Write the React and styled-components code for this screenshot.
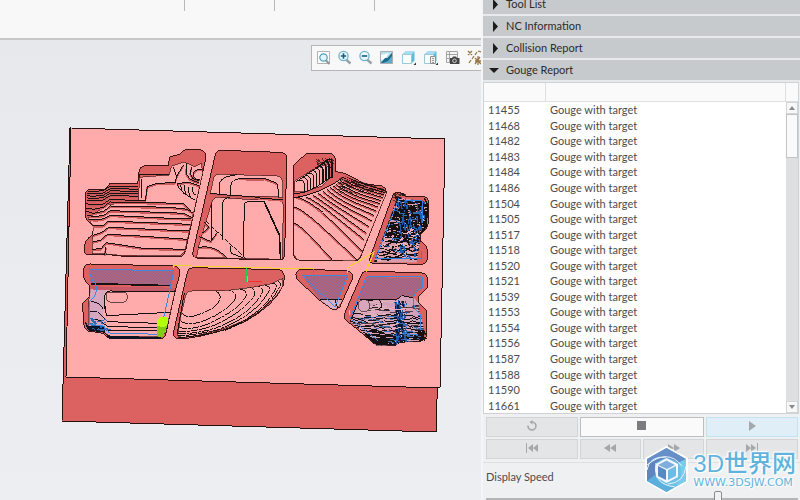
import React, { useState } from "react";
import styled, { createGlobalStyle } from "styled-components";

const GlobalStyle = createGlobalStyle`
  * {
    box-sizing: border-box;
  }

  body {
    margin: 0;
    overflow: hidden;
    background: #eeeff1;
    color: #4c4c4c;
    font-family: Lato, "Open Sans", sans-serif;
    font-size: 11px;
  }

  button {
    font: inherit;
    color: inherit;
  }
`;

const Page = styled.div`
  display: flex;
  height: 100vh;
  overflow: hidden;
`;

const Workspace = styled.main`
  flex: 1;
  min-width: 0;
  display: flex;
  flex-direction: column;
  overflow: hidden;
  background: linear-gradient(#e6e8ec, #edeef1);
`;

const Ribbon = styled.header`
  flex: none;
  display: flex;
  height: 40px;
  background: #f8f8f8;
  border-bottom: 2px solid #c6c8c8;
`;

const RibbonGroup = styled.div`
  width: ${(props) => props.$width}px;
  height: 11px;
  border-right: 1px solid #b9b9b9;
`;

const ViewToolbar = styled.div`
  flex: none;
  align-self: flex-end;
  display: flex;
  align-items: center;
  width: 170px;
  height: 26px;
  margin-top: 5px;
  padding: 0 0 2px 1px;
  overflow: hidden;
  background: #f8f8f8;
  border: 1px solid #b4b6b8;
  border-right: 0;
`;

const ToolButton = styled.button`
  flex: none;
  display: flex;
  justify-content: center;
  width: ${(props) => (props.$wide ? 22 : 21)}px;
  padding: 0;
  border: 0;
  background: none;
`;

const Model = styled.svg`
  flex: none;
  width: 390px;
  height: 310px;
  margin: 54px 0 0 60px;
`;

const Panel = styled.aside`
  flex: none;
  display: flex;
  flex-direction: column;
  width: 319px;
  background: #eff0f1;
  border-left: 2px solid #f4f5f6;
`;

const Accordion = styled.nav`
  display: flex;
  flex-direction: column;
  margin-top: -6px;
`;

const AccordionHeader = styled.button`
  display: flex;
  align-items: center;
  gap: 6px;
  height: 22px;
  padding: 0 6px;
  border: 0;
  border-bottom: 2px solid #e7e9ea;
  background: #c6cacc;
  color: #2b2b2b;
  line-height: 12px;
  text-align: left;
`;

const Arrow = styled.svg`
  width: 11px;
  height: 11px;
  fill: #1c1c1c;
`;

const Report = styled.section`
  display: grid;
  grid-template-columns: 1fr 12px;
  margin-right: 1px;
  background: #ffffff;
  border: 1px solid #d0d2d3;
`;

const ReportTable = styled.table`
  width: 100%;
  height: 330px;
  border-collapse: separate;
  border-spacing: 0;
  table-layout: fixed;
`;

const HeadCell = styled.th`
  width: ${(props) => (props.$narrow ? "62px" : "auto")};
  height: 19px;
  padding: 0;
  background: #fafafa;
  border-right: 1px solid #dcdedf;
  border-bottom: 1px solid #dcdedf;
`;

const Cell = styled.td`
  padding: 0 4px;
  line-height: 15px;
`;

const ScrollBar = styled.div`
  display: flex;
  flex-direction: column;
  background: #dddfe1;
`;

const ScrollCorner = styled.div`
  height: 19px;
  background: #fafafa;
  border-bottom: 1px solid #dcdedf;
`;

const ScrollButton = styled.button`
  display: flex;
  align-items: center;
  justify-content: center;
  height: 12px;
  padding: 0;
  border: 1px solid #d2d4d5;
  background: #f8f8f8;
`;

const ScrollThumb = styled.div`
  height: 44px;
  margin-bottom: auto;
  background: #fafafa;
  border: 1px solid #c2c4c6;
`;

const Controls = styled.div`
  display: grid;
  grid-template-columns: 3fr 2fr 2fr 3fr;
  gap: 2px;
  padding: 3px 2px 3px 3px;
  border-bottom: 1px solid #dfe0e1;
`;

const tones = {
  disabled: "background: #e4e5e7; border-color: #d3d4d6; color: #a6a7a9;",
  normal: "background: #fafafa; border-color: #bdbebf; color: #7c7c7e;",
  active: "background: #dfeef7; border-color: #c3e2f2; color: #a3a8ac;",
};

const ControlButton = styled.button`
  display: flex;
  align-items: center;
  justify-content: center;
  height: 20px;
  padding: 0 0 2px;
  border: 1px solid;
  ${(props) => tones[props.$tone || "disabled"]}
  ${(props) => props.$double && "grid-column: span 2;"}
`;

const Speed = styled.div`
  display: flex;
  flex-direction: column;
  gap: 4px;
  padding: 6px 2px 0 3px;
`;

const SpeedLabel = styled.label`
  line-height: 16px;
`;

const Slider = styled.input`
  appearance: none;
  width: 100%;
  height: 20px;
  margin: 0;
  background: linear-gradient(#b4b5b6, #b4b5b6) center / 100% 2px no-repeat;

  &::-webkit-slider-thumb {
    appearance: none;
    width: 8px;
    height: 16px;
    border: 1px solid #8b8c8e;
    border-radius: 2px;
    background: #f2f2f2;
  }
`;

const Watermark = styled.div`
  position: absolute;
  right: 4px;
  bottom: 6px;
  display: flex;
  align-items: center;
  gap: 4px;
  pointer-events: none;
`;

const WatermarkText = styled.div`
  display: flex;
  flex-direction: column;
  color: #62b3dc;
  text-shadow: 0 0 2px #ffffff, 1px 1px 1px #ffffff, -1px -1px 1px #ffffff,
    0 0 4px #ffffff;
`;

const WatermarkName = styled.span`
  font-family: "Liberation Sans", "Noto Sans CJK SC", sans-serif;
  font-size: 24px;
  font-weight: 500;
  line-height: 26px;
`;

const WatermarkSite = styled.span`
  font-family: "DejaVu Sans", sans-serif;
  font-size: 11px;
  line-height: 12px;
`;

const sections = ["Tool List", "NC Information", "Collision Report", "Gouge Report"];

const gouges = [
  11455, 11468, 11482, 11483, 11484, 11486, 11504, 11505, 11517, 11518, 11520,
  11521, 11539, 11553, 11554, 11556, 11587, 11588, 11590, 11661,
];

const Lens = () => (
  <>
    <path d="M9 9.5l4.5 4" stroke="#9aa2a6" strokeWidth="2.4" />
    <circle cx="6.5" cy="6" r="4.6" fill="#eaf7fb" stroke="#6fb3cd" strokeWidth="1.3" />
  </>
);

const Cube = () => (
  <>
    <path d="M1.5 4.5l3-3h9v9l-3 3h-9z" fill="#5dbbdb" />
    <path d="M1.5 4.5l3-3h9l-3 3z" fill="#a9def0" />
    <path d="M1.5 4.5h9v9h-9z" fill="#fdfefe" stroke="#9cc9da" />
  </>
);

const tools = [
  {
    label: "Refit",
    icon: (
      <>
        <path d="M1.5 1.5h12v12h-12z" fill="#ffffff" stroke="#b3b3b3" />
        <path d="M9.5 10l4 4" stroke="#8f979b" strokeWidth="2" />
        <circle cx="7.5" cy="7.5" r="3.7" fill="#e4f5fa" stroke="#4a9dbc" strokeWidth="1.2" />
      </>
    ),
  },
  {
    label: "Zoom In",
    icon: (
      <>
        <Lens />
        <path d="M3.8 6h5.4M6.500 3.300v5.400" stroke="#155f82" strokeWidth="1.6" />
      </>
    ),
  },
  {
    label: "Zoom Out",
    icon: (
      <>
        <Lens />
        <path d="M3.8 6h5.4" stroke="#155f82" strokeWidth="1.6" />
      </>
    ),
  },
  {
    label: "Repaint",
    icon: (
      <>
        <path d="M1.5 1.5h12v12h-12z" fill="#7cc4de" stroke="#a9adaf" />
        <path d="M2 2h11L7 10l-5 1z" fill="#b6e0ee" />
        <path d="M2 5l8-2-4 6-4 1z" fill="#f8fdfe" />
        <path d="M13 3L8.500 8l-2.500 0-4 5h11z" fill="#1e6c8d" />
        <path d="M13 6l-4 5-5 2h9z" fill="#58aecd" />
      </>
    ),
  },
  {
    label: "Display Style",
    wide: true,
    icon: (
      <>
        <Cube />
        <path d="M15 12.5V15h-2.5z" fill="#333333" />
      </>
    ),
  },
  {
    label: "Saved Orientations",
    wide: true,
    icon: (
      <>
        <Cube />
        <path d="M7.5 6.5h5v7h-5z" fill="#f2f2f2" stroke="#8f8f8f" />
        <path d="M9 8.5h2M9 10.5h2M9 12.5h2" stroke="#999999" />
        <path d="M15 12.5V15h-2.5z" fill="#333333" />
      </>
    ),
  },
  {
    label: "View Manager",
    wide: true,
    icon: (
      <>
        <path d="M1.5 1.5h11v11h-11zM1.5 4.5h11M1.5 8.5h5M4.5 1.5v11" fill="#f6f6f6" stroke="#a2a2a2" />
        <path d="M5 8h2l1-1.5h3L12 8h2.500v6H5z" fill="#444444" />
        <circle cx="9.500" cy="10.800" r="1.800" fill="#444444" stroke="#d7d7d7" />
      </>
    ),
  },
  {
    label: "Datum Display",
    wide: true,
    icon: (
      <path
        d="M1 1l4 4M5 1L1 5M2 13l2-3M5 9l2-3M8 5l2-3M11 1l3 1M8 8l6 6M13 7l-5 7M11 6v9M8 11h7"
        stroke="#97783d"
        strokeWidth="1.3"
      />
    ),
  },
];

// small repeatable noise source so the tool marks look the same on each render
const noise = (seed) => {
  let s = seed;
  return () => {
    s = (s * 16807) % 2147483647;
    return s / 2147483647;
  };
};

const scratches = (seed, count, box, dx, dy) => {
  const rnd = noise(seed);
  let d = "";
  for (let i = 0; i < count; i++) {
    const x = box[0] + rnd() * box[2];
    const y = box[1] + rnd() * box[3];
    d += `M${x.toFixed(0)} ${y.toFixed(0)}l${(dx * (0.4 + rnd())).toFixed(0)} ${(dy * (0.3 + rnd())).toFixed(0)}`;
  }
  return d;
};

// evenly stacked passes across a box, each one wobbling a little
const passes = (seed, box, gap, slope, wobble) => {
  const rnd = noise(seed);
  let d = "";
  for (let y = box[1]; y < box[1] + box[3]; y += gap) {
    d += `M${box[0]} ${y}`;
    for (let x = 12; x <= box[2]; x += 12) {
      d += `L${box[0] + x} ${(y + x * slope + (rnd() - 0.5) * wobble).toFixed(0)}`;
    }
  }
  return d;
};

// every pocket is drawn on a 3x grid from its own origin
const Pocket = ({ x, y, children }) => (
  <g transform={`translate(${x} ${y}) scale(0.3333)`}>{children}</g>
);

const Wall = ({ d }) => <path d={d} fill="#dc6262" stroke="#3a1414" strokeWidth="3" />;
const Floor = ({ d }) => <path d={d} fill="#ffabab" stroke="#3a1414" strokeWidth="2" />;
const Step = ({ d }) => (
  <>
    <path d={d} stroke="#cf5c5c" strokeWidth="5" transform="translate(0 3)" />
    <path d={d} stroke="#161010" strokeWidth="3" />
  </>
);
const Line = ({ d, color = "#161010", width = 3, ...rest }) => (
  <path d={d} stroke={color} strokeWidth={width} {...rest} />
);

const fan = [
  [28, 280, 46, 285, 145, 393],
  [28, 231, 50, 234, 215, 388],
  [34, 202, 72, 206, 230, 362],
  [62, 200, 90, 210, 236, 328],
  [84, 196, 110, 212, 244, 310],
  [100, 190, 130, 214, 252, 290],
  [114, 184, 145, 212, 260, 272],
  [126, 178, 158, 208, 267, 256],
  [136, 172, 170, 202, 274, 243],
  [144, 167, 178, 196, 280, 231],
  [152, 162, 186, 190, 285, 221],
  [158, 156, 192, 182, 289, 212],
  [164, 151, 198, 174, 293, 203],
  [168, 146, 204, 168, 297, 195],
  [172, 141, 210, 162, 300, 188],
  [176, 136, 216, 158, 302, 181],
];

const fins = [0, 1, 2, 3, 4, 5, 6, 7, 8, 9];

const pocketD =
  "M322 200Q326 187 338 187Q352 187 360 198L415 200Q430 202 430 215V275Q430 295 408 312V335Q428 345 428 370Q430 402 412 403L264 400Q250 398 256 380Z";
const pocketE =
  "M72 40Q74 27 90 27L345 33Q360 36 360 55L345 110L318 235Q314 250 300 252L150 250Q138 248 130 235L85 228Q70 220 70 195L68 145L90 122V92Q68 75 72 58Z";
const pocketH =
  "M228 62Q232 48 248 48L412 54Q428 58 428 75L426 100L402 122V145L426 168L424 245L410 258L345 262L330 272H275L195 205Q175 195 177 180Z";
const floorD = "M266 398L338 200L362 206L412 212L426 222V290L405 312V338L395 398Z";
const floorH = "M196 200L224 135L340 132L350 122L385 126L402 145L405 170L420 235L410 258L345 262L330 272H275Z";

const Workpiece = () => (
  <Model
    viewBox="60 125 390 310"
    fill="none"
    shapeRendering="crispEdges"
    role="img"
    aria-label="Machined workpiece"
  >
    <defs>
      <clipPath id="floorD">
        <path d={floorD} />
      </clipPath>
      <clipPath id="floorH">
        <path d={floorH} />
      </clipPath>
      <clipPath id="floorC">
        <path d="M27 198Q110 185 175 138L300 178L304 188L224 392H27Z" />
      </clipPath>
      <pattern id="hatch" width="9" height="9" patternUnits="userSpaceOnUse">
        <rect width="9" height="9" fill="#b0657c" />
        <path d="M-2 11L11 -2M-2 2L2 -2M7 11L11 7" stroke="#91658f" strokeWidth="3" />
      </pattern>
    </defs>

    <path d="M70 128L62 421L436 432L445 139Z" fill="#dc6262" stroke="#251010" />
    <path d="M71 128L445 139L440 388L66 377Z" fill="#ffabab" stroke="#251010" />

    <Pocket x={60} y={120}>
      <Wall d="M76 222Q78 208 95 208L136 207L150 190H233L238 150Q240 140 252 138L326 137L328 112L345 106L358 104L374 90L422 90Q440 94 438 112L376 395Q372 410 355 410L180 408L140 403L82 405Q72 400 73 385Q74 355 98 346L100 318L80 300Q74 290 76 222Z" />
      <Floor d="M100 318L84 295L140 255L236 242L238 172L327 165L335 138L372 126L404 140L424 130L428 160L374 395L358 408L180 406L140 402L96 402L98 346Z" />
      {[212, 219, 226, 233, 240].map((y) => (
        <Step key={y} d={`M80 ${y}L96 ${y + 3}L130 ${y}L152 ${y - 14}L234 ${y - 11}`} />
      ))}
      <Step d="M78 250L96 255L130 252L150 238L256 243L262 200L290 190L345 188L352 165L370 135" />
      <Step d="M78 264L100 268L130 262L150 246L370 250L392 272" />
      <Step d="M79 274L100 280L132 274L150 258L330 262L382 268L400 280" />
      <Step d="M82 286L105 290L132 286L150 272L330 278L372 280L398 294" />
      <Step d="M88 298L110 300L132 296L152 286L330 295L392 297" />
      <Step d="M100 318L128 318L146 303L390 313" />
      <Step d="M98 346L124 338L146 322L386 333" />
      <Step d="M98 366L122 360L142 343L240 348L382 358" />
      <Step d="M96 388L124 386L138 368L250 385L378 388" />
      <Step d="M134 404L138 380" />
      <Line d="M238 172L240 162L327 165M246 176V235M345 190L350 170L340 140" />
      <Step d="M350 192L385 186L418 198M380 130L378 160L390 178L416 188M395 142L390 160L398 176L418 182M426 148Q398 146 400 168Q404 180 420 178" />
      <Line d="M352 192Q354 208 366 212M362 194Q364 220 378 224M374 196Q372 230 392 232M386 200Q384 236 404 240M398 200Q394 218 408 226" />
      <Line d="M402 410Q398 380 410 350L420 330" color="#8d3434" />
    </Pocket>

    <Pocket x={190} y={140}>
      <Wall d="M76 44Q80 31 94 31L270 37Q288 38 290 52L284 345Q283 360 268 360L20 354Q6 352 9 335Z" />
      <Floor d="M60 162L72 112Q78 101 95 103L262 108Q278 112 278 130L279 172L210 168L185 172Z" />
      <Floor d="M66 185Q70 172 84 172L200 180L262 180Q282 182 280 200L277 358L20 352L26 318Z" />
      <Step d="M60 160L120 166L190 170L210 174L280 180" />
      <Line d="M88 162V135Q90 115 115 109L140 104M123 168V135Q126 118 150 116H225L262 132L267 172" />
      <Step d="M146 114L180 117L225 116L262 130" />
      <Line d="M66 300V188M98 300V190Q100 175 120 172M160 352L163 195Q165 184 180 184L225 186" />
      <Line d="M222 184L268 285L272 358" width="5" />
      <Step d="M25 322Q70 312 110 352M28 290L62 304L80 280M42 246L58 262L36 280" />
      <Line d="M48 244L168 356" strokeDasharray="14 5" />
      <Line d="M120 318L124 340L160 354" />
    </Pocket>

    <Pocket x={285} y={130}>
      <Wall d="M27 105L35 98L62 72L140 70L152 85V125L180 130L240 162L292 168Q306 176 304 188L225 385Q222 393 210 392L38 390Q26 388 26 375Z" />
      <Floor d="M27 204Q110 190 175 142L300 184L304 190L224 385L210 392L38 390L27 375Z" />
      <Floor d="M29 186V152L50 140L78 122L110 108L130 104V150L110 168L60 186Z" />
      {fins.map((i) => (
        <Line
          key={i}
          width={i > 5 ? 4 : 3}
          d={`M${32 + i * 10} ${156 - i * 7}Q${50 + i * 10} ${142 - i * 7} ${60 + i * 9} ${162 - i * 7}V${188 - i * 5}`}
        />
      ))}
      <Line d={scratches(41, 26, [92, 84, 48, 26], 9, 7)} width="2" />
      <g clipPath="url(#floorC)">
        {fan.map(([x, y, cx, cy, ex, ey]) => (
          <Step key={y} d={`M${x} ${y}Q${cx} ${cy} ${(cx + ex) / 2} ${(cy + ey) / 2}L${ex} ${ey}`} />
        ))}
        <Line d={scratches(77, 110, [160, 135, 140, 50], 13, 7)} width="2" />
      </g>
      <Line d="M27 204Q110 190 175 142M27 192Q80 190 145 135" />

      <Wall d={pocketD} />
      <g clipPath="url(#floorD)">
        <path d={floorD} fill="#d99ba5" />
        <Line d={passes(6, [262, 200, 168, 200], 8, -0.05, 9)} width="4" />
        <Line d={scratches(5, 160, [285, 205, 140, 130], 20, 6)} width="4" />
        <Line d={scratches(15, 90, [345, 210, 75, 120], 5, 26)} width="4" />
        <Line d={scratches(9, 90, [335, 200, 82, 190], 3, 16)} color="#1f5bb0" width="4" />
        <Line d={scratches(21, 40, [300, 240, 110, 140], 16, 4)} color="#3068b4" />
        <Line d={scratches(31, 45, [268, 300, 130, 95], 12, -7)} color="#f0b3ba" />
      </g>
      <Line d="M342 204L272 386H410V362M360 213H412V280" color="#2e7fe8" />
      <Line d={scratches(8, 40, [324, 188, 30, 24], 7, 5)} width="2" />
      <Line d="M418 205L428 225L424 290L405 310" width="4" />
    </Pocket>

    <Pocket x={60} y={255}>
      <Wall d={pocketE} />
      <Floor d="M92 102L130 100L345 108L318 232L300 246L150 244L134 232L84 215L86 140Z" />
      <path d="M88 42L342 48L334 92L92 86Z" fill="url(#hatch)" />
      <path d="M90 100L138 102L132 150L128 200L150 240L88 214Z" fill="#c8a5c4" fillOpacity="0.75" />
      <path d="M90 94L342 98L340 112L140 106L92 103Z" fill="#c55b68" />
      <Line d="M92 86L332 92" width="5" />
      <Line d="M346 110L150 108Q132 110 134 130L132 150L140 182L215 178L330 172M132 138L138 165M92 140Q118 140 130 162M90 168L112 170L142 200L325 206M90 190L120 196L142 214L320 220M134 225L300 228" />
      <Line d="M148 112H192Q204 114 202 128Q200 142 186 142H155Q138 140 138 126Q138 112 148 112Z" width="2" />
      <path d="M72 195L85 212L130 214L138 238L160 244L304 245L300 253L148 251L132 233L84 226Z" fill="#0d1320" />
      <Line d={scratches(19, 30, [86, 190, 50, 34], 12, 4)} color="#2d68b4" />
      <Line d="M88 42L342 48L300 238L148 234L130 212L88 208V140Q118 118 106 84Q88 70 88 42Z" color="#3f88e0" />
      <path d="M292 196Q306 178 324 188L322 214L310 244Q298 250 290 240Z" fill="#7fcf10" />
      <path d="M292 196Q306 178 324 188L322 212Q308 220 292 212Z" fill="#b4ff0a" />
    </Pocket>

    <Pocket x={165} y={255}>
      <Wall d="M68 48Q72 38 85 38L345 44Q358 50 358 70L355 90Q330 150 240 200Q150 240 55 252L35 250Q22 245 27 225Z" />
      <Floor d="M48 180L62 122Q66 108 80 108H150L190 106L255 98L320 86L354 70V92Q326 148 240 196Q150 236 55 248L38 244Z" />
      <Line d="M52 175Q60 188 85 184Q165 160 165 128Q168 116 152 108M48 200Q75 214 120 196Q205 158 212 125Q212 112 192 106M44 218Q80 226 132 206Q225 162 244 122Q246 106 224 102M42 230Q80 232 140 214Q240 170 270 118Q272 104 254 98M40 237Q80 238 150 220Q260 178 292 112Q294 98 278 94M38 243Q90 240 160 224Q280 176 314 104Q316 94 300 90M38 248Q90 246 175 226Q300 176 334 96Q334 86 322 84M180 226Q310 176 348 86L340 78" strokeDasharray="22 3 9 2" />
      <Line d="M58 114L36 238" />
      <Line d="M245 35V80" color="#19d651" />
      <Line d="M245 79H291" color="#ff2b2b" />
      <Line d="M247 64V80" color="#5ed9e8" />
    </Pocket>

    <Pocket x={285} y={255}>
      <Wall d="M34 70Q28 45 50 43L188 47Q206 52 202 72L165 155Q155 168 142 163L100 133Z" />
      <path d="M50 60L188 63L160 134L104 133Z" fill="url(#hatch)" />
      <path d="M104 133L172 135L156 160L142 162Z" fill="#dbb0c4" />
      <Line d="M104 133H172M150 134L158 158" />
      <Line d="M50 60L188 63L150 156ZM86 40V60" color="#3f88e0" />

      <Wall d={pocketH} />
      <path d="M246 66L412 70V98L384 126L340 130L218 134Z" fill="url(#hatch)" />
      <g clipPath="url(#floorH)">
        <path d={floorH} fill="#d3a2b8" />
        <Line d={passes(61, [190, 178, 240, 100], 8, 0.03, 8)} width="3" />
        <Line d={scratches(51, 60, [200, 150, 220, 80], 28, -4)} width="2" />
        <Line d={scratches(52, 50, [220, 228, 200, 44], 34, 5)} width="5" />
        <Line d={scratches(53, 50, [330, 126, 24, 140], 3, 18)} color="#0a1a38" width="5" />
        <Line d={scratches(54, 55, [328, 126, 35, 130], 4, 14)} color="#2058a8" />
        <Line d={scratches(55, 35, [220, 180, 180, 80], 24, 7)} color="#3a6fb4" />
        <Line d={scratches(56, 40, [215, 140, 115, 90], 30, -4)} color="#e7b0bd" />
      </g>
      <circle cx="237" cy="152" r="18" fill="#d9a6bb" stroke="#2b1c22" strokeWidth="2" />
      <Line d="M248 136L280 134Q292 142 288 158L275 166M224 134L340 132L350 122L385 128M220 140L196 200" />
      <Line d="M246 66H412V98Q384 110 384 140L392 165L408 180V240L350 236M244 66L196 190L280 258" color="#3f88e0" />
      <Line d={scratches(57, 20, [400, 225, 16, 28], 8, 6)} width="4" />
      <Line d="M195 180V165" color="#f5cf2c" />
    </Pocket>

    <path d="M173 268V265.500L230 267L314 269M347 273V268L374 252L366 272" stroke="#f8d22a" />
  </Model>
);

const Media = ({ d }) => (
  <svg width="14" height="12" viewBox="0 0 14 12" fill="currentColor" aria-hidden="true">
    <path d={d} />
  </svg>
);

const Logo = () => (
  <svg width="45" height="48" viewBox="0 0 45 48" aria-hidden="true">
    <path d="M22.500 1L43 12.500V35L22.500 47L2 35V12.500Z" fill="#ffffff" stroke="#ffffff" strokeWidth="2" />
    <path d="M22.500 2L42 13V35L22.500 46L3 35V13Z" fill="#6dbfe4" />
    <path d="M22.500 2L42 13L34 17Q22 7 3 19V13Z" fill="#668fc9" />
    <path d="M3 19Q9 10 22 11L12 17V34L3 35Z" fill="#5f84bf" />
    <path d="M3 35L12 28Q13 40 31 41L22.500 46Z" fill="#5cafdc" />
    <path d="M42 13V35L31 41Q41 28 34 17Z" fill="#7bcbea" />
    <path d="M22.500 12L34 18V31L22.500 37L12 31V18Z" fill="#f2f8fc" />
    <path d="M22.500 14.500L31 19L23 23L14 19Z" fill="#7faede" />
    <path d="M14 20L22 24V34L14 30Z" fill="#5689c5" />
    <path d="M32 20L24 24V34L32 30Z" fill="#6ebce3" />
    <path d="M3 19Q24 2 38 20M12 17Q8 38 31 41M22 11Q5 10 3 24M42 20Q40 37 24 38" fill="none" stroke="#e6f4fb" />
  </svg>
);

const App = () => {
  const [speed, setSpeed] = useState(75);

  return (
    <Page>
      <GlobalStyle />
      <Workspace>
        <Ribbon>
          <RibbonGroup $width={185} />
          <RibbonGroup $width={90} />
          <RibbonGroup $width={100} />
        </Ribbon>
        <ViewToolbar>
          {tools.map((tool) => (
            <ToolButton key={tool.label} $wide={tool.wide} aria-label={tool.label}>
              <svg width="15" height="15" viewBox="0 0 15 15" fill="none">
                {tool.icon}
              </svg>
            </ToolButton>
          ))}
        </ViewToolbar>
        <Workpiece />
      </Workspace>

      <Panel>
        <Accordion>
          {sections.map((name) => {
            const open = name === "Gouge Report";
            return (
              <AccordionHeader key={name} aria-expanded={open}>
                <Arrow viewBox="0 0 11 11" aria-hidden="true">
                  <path d={open ? "M0 3h10L5 8z" : "M4 0v11l5-5.500z"} />
                </Arrow>
                {name}
              </AccordionHeader>
            );
          })}
        </Accordion>

        <Report>
          <ReportTable>
            <thead>
              <tr>
                <HeadCell $narrow aria-label="Step" />
                <HeadCell aria-label="Report" />
              </tr>
            </thead>
            <tbody>
              {gouges.map((step) => (
                <tr key={step}>
                  <Cell>{step}</Cell>
                  <Cell>Gouge with target</Cell>
                </tr>
              ))}
            </tbody>
          </ReportTable>
          <ScrollBar>
            <ScrollCorner />
            <ScrollButton aria-label="Scroll up">
              <svg width="6" height="4" fill="#8a8a8a">
                <path d="M0 4L3 0l3 4z" />
              </svg>
            </ScrollButton>
            <ScrollThumb />
            <ScrollButton aria-label="Scroll down">
              <svg width="6" height="4" fill="#8a8a8a">
                <path d="M0 0l3 4 3-4z" />
              </svg>
            </ScrollButton>
          </ScrollBar>
        </Report>

        <Controls>
          <ControlButton aria-label="Restart">
            <svg width="12" height="12" viewBox="0 0 12 12" fill="none" aria-hidden="true">
              <path d="M2 5.500a4 4 0 1 0 4-3.500" stroke="currentColor" strokeWidth="1.500" />
              <path d="M6.500 0v4.500L3.500 2z" fill="currentColor" />
            </svg>
          </ControlButton>
          <ControlButton $tone="normal" $double aria-label="Stop">
            <Media d="M2 1h9v9H2z" />
          </ControlButton>
          <ControlButton $tone="active" aria-label="Play">
            <Media d="M4 1l7 5-7 5z" />
          </ControlButton>
          <ControlButton aria-label="To start">
            <Media d="M1 1h1v10H1zM8 2v8L3 6zM13 2v8L8 6z" />
          </ControlButton>
          <ControlButton aria-label="Rewind">
            <Media d="M7 2v8L1 6zM13 2v8L7 6z" />
          </ControlButton>
          <ControlButton aria-label="Fast forward">
            <Media d="M1 2v8l6-4zM7 2v8l6-4z" />
          </ControlButton>
          <ControlButton aria-label="To end">
            <Media d="M12 1h1v10h-1zM1 2v8l5-4zM6 2v8l5-4z" />
          </ControlButton>
        </Controls>

        <Speed>
          <SpeedLabel htmlFor="speed">Display Speed</SpeedLabel>
          <Slider
            id="speed"
            type="range"
            min="0"
            max="100"
            value={speed}
            onChange={(e) => setSpeed(Number(e.target.value))}
          />
        </Speed>
      </Panel>

      <Watermark>
        <Logo />
        <WatermarkText>
          <WatermarkName>3D世界网</WatermarkName>
          <WatermarkSite>WWW.3DSJW.COM</WatermarkSite>
        </WatermarkText>
      </Watermark>
    </Page>
  );
};

export default App;
